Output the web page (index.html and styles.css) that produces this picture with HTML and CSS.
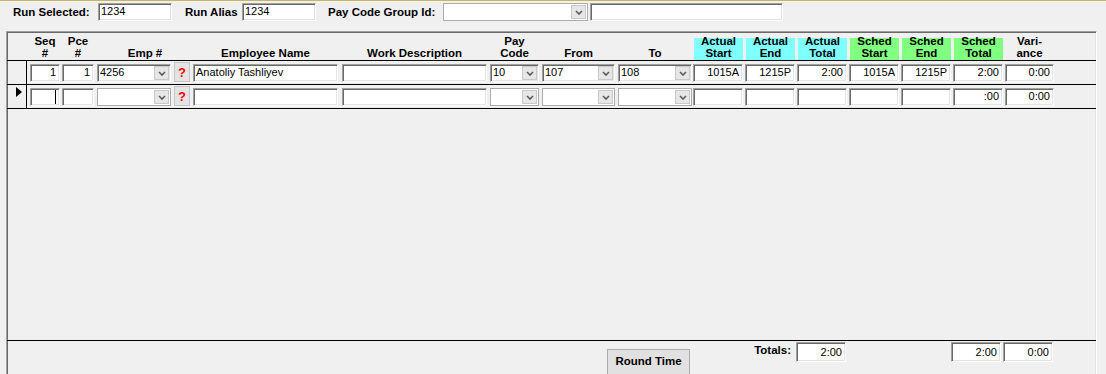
FILE: index.html
```html
<!DOCTYPE html>
<html>
<head>
<meta charset="utf-8">
<link rel="stylesheet" href="styles.css">
</head>
<body>
<div class="topbar">
  <span class="lbl lbl-run">Run Selected:</span>
  <div class="fld tb-run">1234</div>
  <span class="lbl lbl-alias">Run Alias</span>
  <div class="fld tb-alias">1234</div>
  <span class="lbl lbl-pcg">Pay Code Group Id:</span>
  <div class="combo tb-pcg"><span class="cv"></span><span class="dd"><svg width="8" height="5" viewBox="0 0 8 5"><path d="M1 1l3 3 3-3" stroke="#5a5a5a" stroke-width="1.6" fill="none"/></svg></span></div>
  <div class="fld tb-extra"></div>
</div>

<div class="panel">
  <div class="cols hdr">
    <div></div><div></div>
    <div class="hc"><div class="hl w-seq"><div>Seq<br>#</div></div></div>
    <div class="hc"><div class="hl w-pce"><div>Pce<br>#</div></div></div>
    <div class="hc span2"><div class="hl w-emph"><div>Emp #</div></div></div>
    <div class="hc"><div class="hl w-name"><div>Employee Name</div></div></div>
    <div class="hc"><div class="hl w-work"><div>Work Description</div></div></div>
    <div class="hc"><div class="hl w-pay"><div>Pay<br>Code</div></div></div>
    <div class="hc"><div class="hl w-from"><div>From</div></div></div>
    <div class="hc"><div class="hl w-to"><div>To</div></div></div>
    <div class="hc"><div class="hl w-tc cyan"><div>Actual<br>Start</div></div></div>
    <div class="hc"><div class="hl w-tc cyan"><div>Actual<br>End</div></div></div>
    <div class="hc"><div class="hl w-tc cyan"><div>Actual<br>Total</div></div></div>
    <div class="hc"><div class="hl w-tc green"><div>Sched<br>Start</div></div></div>
    <div class="hc"><div class="hl w-tc green"><div>Sched<br>End</div></div></div>
    <div class="hc"><div class="hl w-tc green"><div>Sched<br>Total</div></div></div>
    <div class="hc"><div class="hl w-var"><div>Vari-<br>ance</div></div></div>
  </div>

  <div class="cols row">
    <div class="sel"></div><div></div>
    <div class="fld r w-seq">1</div>
    <div class="fld r w-pce">1</div>
    <div class="combo filled w-emp"><span class="cv">4256</span><span class="dd"><svg width="8" height="5" viewBox="0 0 8 5"><path d="M1 1l3 3 3-3" stroke="#5a5a5a" stroke-width="1.6" fill="none"/></svg></span></div>
    <div class="qbtn">?</div>
    <div class="fld w-name">Anatoliy Tashliyev</div>
    <div class="fld w-work"></div>
    <div class="combo filled w-pay"><span class="cv">10</span><span class="dd"><svg width="8" height="5" viewBox="0 0 8 5"><path d="M1 1l3 3 3-3" stroke="#5a5a5a" stroke-width="1.6" fill="none"/></svg></span></div>
    <div class="combo filled w-from"><span class="cv">107</span><span class="dd"><svg width="8" height="5" viewBox="0 0 8 5"><path d="M1 1l3 3 3-3" stroke="#5a5a5a" stroke-width="1.6" fill="none"/></svg></span></div>
    <div class="combo filled w-to"><span class="cv">108</span><span class="dd"><svg width="8" height="5" viewBox="0 0 8 5"><path d="M1 1l3 3 3-3" stroke="#5a5a5a" stroke-width="1.6" fill="none"/></svg></span></div>
    <div class="fld r w-t">1015A</div>
    <div class="fld r w-t">1215P</div>
    <div class="fld r w-t">2:00</div>
    <div class="fld r w-t">1015A</div>
    <div class="fld r w-t">1215P</div>
    <div class="fld r w-t">2:00</div>
    <div class="fld r w-var">0:00</div>
  </div>

  <div class="cols row">
    <div class="sel"><span class="arrow"></span></div><div></div>
    <div class="fld r w-seq"><span class="caret"></span></div>
    <div class="fld r w-pce"></div>
    <div class="combo w-emp"><span class="cv"></span><span class="dd"><svg width="8" height="5" viewBox="0 0 8 5"><path d="M1 1l3 3 3-3" stroke="#5a5a5a" stroke-width="1.6" fill="none"/></svg></span></div>
    <div class="qbtn">?</div>
    <div class="fld w-name"></div>
    <div class="fld w-work"></div>
    <div class="combo w-pay"><span class="cv"></span><span class="dd"><svg width="8" height="5" viewBox="0 0 8 5"><path d="M1 1l3 3 3-3" stroke="#5a5a5a" stroke-width="1.6" fill="none"/></svg></span></div>
    <div class="combo w-from"><span class="cv"></span><span class="dd"><svg width="8" height="5" viewBox="0 0 8 5"><path d="M1 1l3 3 3-3" stroke="#5a5a5a" stroke-width="1.6" fill="none"/></svg></span></div>
    <div class="combo w-to"><span class="cv"></span><span class="dd"><svg width="8" height="5" viewBox="0 0 8 5"><path d="M1 1l3 3 3-3" stroke="#5a5a5a" stroke-width="1.6" fill="none"/></svg></span></div>
    <div class="fld r w-t"></div>
    <div class="fld r w-t"></div>
    <div class="fld r w-t"></div>
    <div class="fld r w-t"></div>
    <div class="fld r w-t"></div>
    <div class="fld r w-t">:00</div>
    <div class="fld r w-var">0:00</div>
  </div>

  <div class="filler"></div>

  <div class="footer">
    <div class="btn-round">Round Time</div>
    <div class="lbl tot-lbl">Totals:</div>
    <div class="fld r tot tot-a">2:00</div>
    <div class="fld r tot tot-s">2:00</div>
    <div class="fld r tot tot-v">0:00</div>
  </div>
</div>
</body>
</html>
```

FILE: styles.css
```css
* { box-sizing: border-box; }
html, body { margin: 0; height: 374px; overflow: hidden; }
body {
  background: #f0f0f0;
  font-family: "Liberation Sans", Arial, sans-serif;
  font-size: 11px;
  color: #000;
}

/* top bar */
.topbar {
  display: flex;
  align-items: center;
  height: 21px;
  border-top: 1px solid #c7b65a;
  padding: 2px 0 0 13px;
}
.lbl { font-weight: bold; font-size: 11.5px; line-height: 14px; white-space: nowrap; }
.lbl-run { width: 85px; }
.tb-run { width: 74px; }
.lbl-alias { margin-left: 13px; width: 57px; }
.tb-alias { width: 74px; }
.lbl-pcg { margin-left: 12px; width: 115px; }
.tb-pcg { width: 145px; }
.tb-extra { margin-left: 2px; width: 193px; }

/* fields */
.fld {
  height: 18px;
  background: #fff;
  border: 1px solid;
  border-color: #a0a0a0 #fff #fff #a0a0a0;
  box-shadow: inset 1px 1px 0 #696969, inset -1px -1px 0 #e3e3e3;
  line-height: 14px;
  padding: 0 2px;
  white-space: nowrap;
  overflow: hidden;
}
.fld.r { text-align: right; padding-right: 3px; display: flex; justify-content: flex-end; }
.caret { display: block; width: 1px; height: 14px; margin-top: 1px; background: #000; }

.combo {
  height: 18px;
  background: #fff;
  border: 1px solid #acacac;
  display: flex;
  line-height: 14px;
}
.combo.filled {
  border-color: #a0a0a0 #fff #fff #a0a0a0;
  box-shadow: inset 1px 1px 0 #696969, inset -1px -1px 0 #e3e3e3;
}
.cv { flex: 1; padding-left: 2px; white-space: nowrap; overflow: hidden; }
.dd {
  width: 15px;
  height: 14px;
  margin: 1px 1px 0 0;
  background: #e6e6e6;
  border: 1px solid #c9c9c9;
  display: flex;
  align-items: center;
  justify-content: center;
}
.dd svg { display: block; }

/* panel */
.panel {
  margin: 10px 0 0 6px;
  width: 1091px;
  height: 360px;
  border: 1px solid;
  border-color: #a0a0a0 #fff #fff #a0a0a0;
  box-shadow: inset 1px 1px 0 #696969, inset -1px -1px 0 #e3e3e3;
}
.cols {
  display: grid;
  grid-template-columns: 20px 3px 32px 35px 77px 19px 149px 148px 52px 76px 75px 52px 52px 52px 52px 52px 52px 1fr;
}
.hdr { height: 29px; border-bottom: 1px solid #000; }
.hc { display: flex; align-items: flex-end; }
.span2 { grid-column: span 2; }
.hl {
  height: 22px;
  display: flex;
  flex-direction: column;
  justify-content: flex-end;
  text-align: center;
  font-weight: bold;
  font-size: 11.5px;
  line-height: 12px;
  padding-bottom: 1px;
  white-space: nowrap;
}
.cyan { background: #80ffff; }
.green { background: #80ff80; }

.w-seq { width: 30px; }
.w-pce { width: 32px; }
.w-emph { width: 98px; }
.w-emp { width: 74px; }
.w-name { width: 145px; }
.w-work { width: 145px; }
.w-pay { width: 49px; }
.w-from { width: 73px; }
.w-to { width: 74px; }
.w-t { width: 50px; }
.hl.w-tc { width: 49px; margin-left: 1px; }
.w-var { width: 49px; }

.row { height: 24px; border-bottom: 1px solid #000; align-items: start; }
.row .fld, .row .combo { margin-top: 3px; }
.sel { height: 23px; border-right: 1px solid #000; }
.arrow {
  display: block;
  width: 0; height: 0;
  margin: 2px 0 0 9px;
  border-left: 6px solid #000;
  border-top: 5.5px solid transparent;
  border-bottom: 5.5px solid transparent;
}
.qbtn {
  width: 16px;
  height: 20px;
  margin-top: 1px;
  background: #e4e4e4;
  border: 1px solid #c6c6c6;
  color: #f00;
  font-weight: bold;
  font-size: 13px;
  line-height: 19px;
  text-align: center;
}

.filler { height: 232px; border-bottom: 1px solid #000; }

.footer { display: flex; align-items: flex-start; }
.btn-round {
  margin: 8px 0 0 600px;
  width: 83px;
  height: 30px;
  background: #e1e1e1;
  border: 1px solid #adadad;
  font-weight: bold;
  font-size: 11.5px;
  text-align: center;
  line-height: 22px;
}
.tot-lbl { margin: 2px 0 0 61px; width: 40px; text-align: right; }
.tot { height: 20px; margin-top: 1px; width: 50px; padding-top: 2px; }
.tot-a { margin-left: 5px; }
.tot-s { margin-left: 105px; }
.tot-v { margin-left: 2px; }
```
